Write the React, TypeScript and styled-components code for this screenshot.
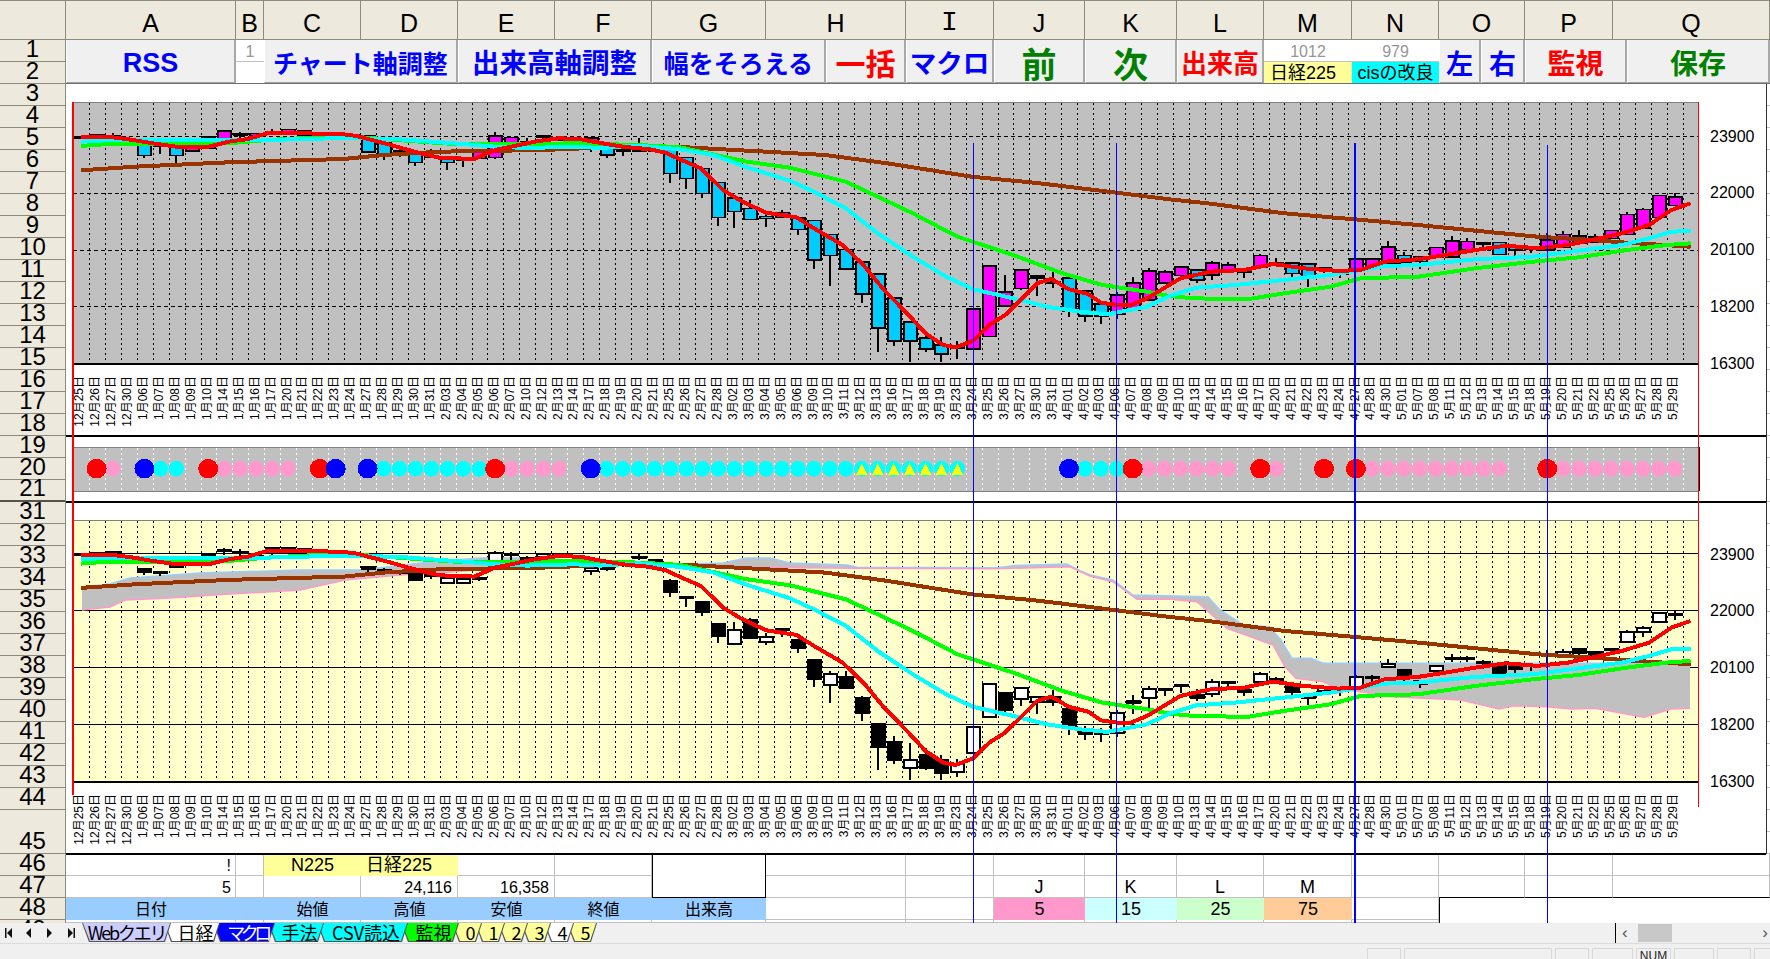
import styled, { createGlobalStyle } from 'styled-components'

const GlobalStyle = createGlobalStyle`
  html, body {
    margin: 0;
    padding: 0;
    background: #fff;
    font-family: "Liberation Sans", "Noto Sans CJK JP", sans-serif;
  }
`

const SANS = '"Liberation Sans", "Noto Sans CJK JP", sans-serif'
const HEADER_BG = '#eee9dd'
const HEADER_LINE = '#8c8a7a'
const GRID_LINE = '#c0c0c0'

const Page = styled.div`
  position: relative;
  width: 1770px;
  height: 959px;
  overflow: hidden;
  display: flex;
  flex-direction: column;
  background: #fff;
`

const Sheet = styled.div`
  display: flex;
  height: 923px;
  overflow: hidden;
`

const RowHeaders = styled.div`
  flex: none;
  width: 66px;
  display: flex;
  flex-direction: column;
`

const Corner = styled.div`
  flex: none;
  height: 40px;
  box-sizing: border-box;
  background: ${HEADER_BG};
  border-right: 1px solid ${HEADER_LINE};
  border-bottom: 1px solid ${HEADER_LINE};
  border-top: 1px solid ${HEADER_LINE};
`

const RowHead = styled.div<{ $h: number; $heavy?: boolean }>`
  flex: none;
  height: ${(p) => p.$h}px;
  box-sizing: border-box;
  background: ${HEADER_BG};
  border-right: 1px solid ${HEADER_LINE};
  border-bottom: ${(p) => (p.$heavy ? '2px solid #55544a' : `1px solid ${HEADER_LINE}`)};
  display: flex;
  align-items: flex-end;
  justify-content: center;
  font-size: 24px;
  line-height: 24px;
  color: #000;
`

const SheetBody = styled.div`
  flex: 1;
  display: flex;
  flex-direction: column;
  min-width: 0;
`

const ColumnBar = styled.div`
  display: flex;
  flex: none;
  height: 40px;
`

const ColHead = styled.div<{ $w: number; $mono?: boolean }>`
  flex: none;
  width: ${(p) => p.$w}px;
  box-sizing: border-box;
  background: ${HEADER_BG};
  border-top: 1px solid ${HEADER_LINE};
  border-right: 1px solid ${HEADER_LINE};
  border-bottom: 1px solid ${HEADER_LINE};
  padding-top: 6px;
  text-align: center;
  font-family: ${(p) => (p.$mono ? '"Liberation Mono", monospace' : SANS)};
  font-size: ${(p) => (p.$mono ? 28 : 25)}px;
  line-height: 32px;
  color: #000;
`

const ButtonRow = styled.div`
  display: flex;
  flex: none;
  height: 44px;
  border-bottom: 1px solid #707070;
  box-sizing: border-box;
`

const MacroButton = styled.div<{ $w: number; $color: string; $size?: number }>`
  flex: none;
  width: ${(p) => p.$w}px;
  box-sizing: border-box;
  background: #f0f0f0;
  border-left: 1px solid #fff;
  border-right: 2px solid #a8a8a8;
  border-bottom: 1px solid #a0a0a0;
  display: flex;
  align-items: center;
  justify-content: center;
  padding-top: 2px;
  color: ${(p) => p.$color};
  font-family: "Noto Sans CJK JP", ${SANS};
  font-weight: 700;
  font-size: ${(p) => p.$size ?? 25}px;
  line-height: 1;
  white-space: nowrap;
`

const LatinLabel = styled.span`
  padding-top: 3px;
  font-family: ${SANS};
  font-weight: 700;
  font-size: 27px;
`

const StackCell = styled.div<{ $w: number }>`
  flex: none;
  width: ${(p) => p.$w}px;
  display: flex;
  flex-direction: column;
`

const StackTop = styled.div`
  flex: none;
  height: 22px;
  box-sizing: border-box;
  background: #fff;
  border-bottom: 1px solid ${GRID_LINE};
  text-align: center;
  color: #969696;
  font-size: 16px;
  line-height: 24px;
`

const StackBottom = styled.div<{ $bg: string; $size?: number; $inset?: number }>`
  flex: 1;
  background: ${(p) => p.$bg};
  color: #000;
  font-size: ${(p) => p.$size ?? 18}px;
  line-height: 23px;
  padding-right: ${(p) => p.$inset ?? 0}px;
  text-align: center;
  white-space: nowrap;
  overflow: hidden;
`

const Blank = styled.div`
  flex: none;
  height: 770px;
  background: repeating-linear-gradient(to bottom, #fff 0, #fff 21px, ${GRID_LINE} 21px, ${GRID_LINE} 22px);
`

const GridRow = styled.div<{ $h: number }>`
  display: flex;
  flex: none;
  height: ${(p) => p.$h}px;
`

const Cell = styled.div<{
  $w: number
  $bg?: string
  $align?: string
  $pad?: number
  $boxSide?: boolean
  $boxBottom?: boolean
  $boxLeft?: boolean
  $bare?: boolean
  $size?: number
}>`
  flex: none;
  width: ${(p) => p.$w}px;
  box-sizing: border-box;
  background: ${(p) => p.$bg ?? '#fff'};
  border-right: ${(p) => (p.$boxSide ? '1px solid #000' : p.$bg || p.$bare ? 'none' : `1px solid ${GRID_LINE}`)};
  border-left: ${(p) => (p.$boxSide || p.$boxLeft ? '1px solid #000' : 'none')};
  border-bottom: ${(p) =>
    p.$boxBottom ? '1px solid #000' : p.$bare ? 'none' : p.$bg ? `1px solid ${p.$bg}` : `1px solid ${GRID_LINE}`};
  padding: 0 ${(p) => p.$pad ?? 0}px;
  text-align: ${(p) => p.$align ?? 'center'};
  font-size: ${(p) => p.$size ?? 16}px;
  line-height: 23px;
  color: #000;
  white-space: nowrap;
`

const ChartLayer = styled.svg`
  position: absolute;
  left: 0;
  top: 0;
  pointer-events: none;
`

const DateLabel = styled.text`
  font-family: ${SANS};
  font-size: 12px;
  fill: #000;
  text-anchor: end;
`

const AxisLabel = styled.text`
  font-family: ${SANS};
  font-size: 16px;
  fill: #000;
`

const TabBar = styled.div`
  flex: none;
  height: 20px;
  display: flex;
  align-items: stretch;
  background: #f0f0f0;
`

const TabNav = styled.div`
  flex: none;
  width: 82px;
`

const TabStrip = styled.div`
  flex: none;
  width: 1534px;
  display: flex;
  border-right: 1px solid #000;
  box-sizing: border-box;
`

const SheetTab = styled.div<{ $w: number; $bg: string; $fg?: string; $z: number; $first?: boolean; $squeeze?: number }>`
  position: relative;
  flex: none;
  width: ${(p) => p.$w}px;
  height: 19px;
  margin-left: ${(p) => (p.$first ? 0 : -7)}px;
  z-index: ${(p) => p.$z};
  background: #555;
  clip-path: polygon(0 0, 100% 0, calc(100% - 6px) 100%, 7px 100%);
  font-family: "Noto Sans CJK JP", ${SANS};
  font-size: 18px;
  letter-spacing: ${(p) => p.$squeeze ?? 0}px;
  color: ${(p) => p.$fg ?? '#000'};

  &::before {
    content: '';
    position: absolute;
    inset: 0 1px 1px 1px;
    background: ${(p) => p.$bg};
    clip-path: polygon(0 0, 100% 0, calc(100% - 6px) 100%, 7px 100%);
  }
`

const TabText = styled.span<{ $first?: boolean }>`
  position: absolute;
  left: ${(p) => (p.$first ? 0 : 7)}px;
  right: 0;
  top: 0;
  text-align: center;
  line-height: 19px;
  white-space: nowrap;
`

const ScrollBar = styled.div`
  flex: 1;
  position: relative;
  display: flex;
  align-items: center;
  justify-content: space-between;
  padding: 0 2px 0 6px;
  color: #555;
  font-size: 17px;
  line-height: 18px;
`

const ScrollThumb = styled.div`
  position: absolute;
  left: 22px;
  top: 1px;
  width: 34px;
  height: 18px;
  background: #c8c8c8;
`

const StatusBar = styled.div`
  flex: none;
  height: 16px;
  box-sizing: border-box;
  border-top: 1px solid #dcdcdc;
  background: #f0f0f0;
  display: flex;
  padding-top: 4px;
  overflow: hidden;
`

const StatusText = styled.div`
  flex: none;
  width: 1367px;
  margin-left: -7px;
  margin-right: 7px;
  font-size: 12px;
  line-height: 14px;
  color: #222;
`

const StatusPanel = styled.div<{ $w: number }>`
  flex: none;
  width: ${(p) => p.$w}px;
  height: 16px;
  box-sizing: border-box;
  margin-right: 3px;
  border: 1px solid #d8d8d8;
  border-bottom: none;
  font-size: 12px;
  line-height: 15px;
  text-align: center;
  color: #222;
`

const COLS = [
  ['A', 170], ['B', 28], ['C', 97], ['D', 97], ['E', 97], ['F', 97], ['G', 114], ['H', 140], ['I', 88],
  ['J', 91], ['K', 92], ['L', 87], ['M', 88], ['N', 87], ['O', 86], ['P', 88], ['Q', 157],
] as [string, number][]

const ROW_LABELS = [
  ...Array.from({ length: 21 }, (_, i) => i + 1),
  ...Array.from({ length: 14 }, (_, i) => i + 31),
  45, 46, 47, 48, 49,
]

const DATES = [
  '12月25日','12月26日','12月27日','12月30日',
  ...[6,7,8,9,10,14,15,16,17,20,21,22,23,24,27,28,29,30,31].map((d) => `1月${String(d).padStart(2, '0')}日`),
  ...[3,4,5,6,7,10,12,13,14,17,18,19,20,21,25,26,27,28].map((d) => `2月${String(d).padStart(2, '0')}日`),
  ...[2,3,4,5,6,9,10,11,12,13,16,17,18,19,23,24,25,26,27,30,31].map((d) => `3月${String(d).padStart(2, '0')}日`),
  ...[1,2,3,6,7,8,9,10,13,14,15,16,17,20,21,22,23,24,27,28,30].map((d) => `4月${String(d).padStart(2, '0')}日`),
  ...[1,7,8,11,12,13,14,15,18,19,20,21,22,25,26,27,28,29].map((d) => `5月${String(d).padStart(2, '0')}日`),
]

// wick top, body top, body bottom, wick bottom, up
type Bar = [number, number, number, number, number]

const TOP_BARS: Bar[] = [
  [137,137,138,138,0],[134,134.3,137.3,137.3,1],[133,136,137,137.5,0],[139,140,141.7,142,0],[144,144,155.3,158.3,0],
  [144,145,146,154,0],[146,146,155.3,164,0],[146,146.7,151,151,1],[136,136.7,148.3,149,1],[131,131,142.7,143,1],
  [132,134,135,137.5,0],[133,133.3,136,136,1],[129,131.7,133.3,134,1],[129,129.3,132.7,133,1],[130,131,135,135,1],
  [131.7,134,135,136.7,0],[133,134,135,136,0],[134,135,136,137,0],[135,135.3,151.7,152.7,0],[142,142.3,154,160,0],
  [149.3,151,152.7,156.7,0],[154,154.3,162.3,165.7,0],[149,156,157,158.3,0],[156.7,156.7,162.3,170,0],[158,159,160,166.7,0],
  [150,150,158.3,158.3,1],[132.3,136,157.3,158.7,1],[137,137.3,150.7,151,1],[138.3,142,143,150,0],[134.7,136,137,143.3,0],
  [137,138,140,141,1],[137,139,140,140,0],[138,138,143.3,151.7,1],[143,143.3,155,158.3,0],[148,150,151,156,0],
  [137.7,149.3,150.7,151,0],[148,150,151,152,0],[148,148.3,173.3,182.7,0],[157,157.3,178.3,188.7,0],[168,168.3,193.3,197.7,0],
  [182,182.3,217.3,225.7,0],[197,197.7,211.3,227.7,0],[200,208.3,219.3,220.3,0],[214.3,216.3,218.3,226.7,0],[210,212.3,217.3,218,1],
  [217,217.7,229.3,234.7,0],[220,220.3,260.3,268.7,0],[234,234.3,255.3,285.7,0],[249,249.3,269.3,270.3,0],[262,262.3,294.3,302.7,0],
  [274,274.3,328.3,351.7,0],[298,298.3,341.3,345.7,0],[322,322.3,341.3,361.7,0],[333.3,338.3,349.3,351.7,0],[337.3,345.3,354.3,361.7,0],
  [341,347.3,348.7,358.7,0],[309,309.3,349.3,350,1],[265.3,266.3,336.7,337.3,1],[275,292.3,306,307.3,1],[270,270.3,288.7,290,1],
  [276,276,278.3,295.7,0],[272.3,281.7,283.3,287.7,0],[278,278.3,311.7,316.7,0],[291,291.3,316.3,321.7,0],[304,304.3,316.3,324,0],
  [292.3,295.3,314.3,319,1],[277.3,283.3,310,310,1],[268.3,271.3,300,300,1],[270,272.3,283,283,1],[267,267.3,275.7,278,1],
  [270,270.3,280.3,283,0],[261,263.3,275,280,1],[262.3,265.3,270,270,1],[270,270,272.3,277.7,1],[254,255.3,267.3,267.3,1],
  [258.3,262.7,265.3,265.3,1],[263,263.3,273.7,276.7,0],[264,264.3,277.3,286.7,0],[268,268,270,273.3,0],[270,270,274,277.7,0],
  [259,259.3,271.7,272,1],[258.3,259.3,266.7,267,1],[241,246.7,263.3,263.3,1],[252.3,255.3,262.7,265,0],[256.7,256.7,261.3,269.3,0],
  [247,247.3,256.7,257,1],[236,240.7,256.7,257.3,1],[238.3,241.3,250,250,1],[241.7,243,244,250,0],[242,242.3,254.3,255,0],
  [246.7,246.7,250,255.7,0],[246,248,249,252.7,0],[232.7,240,250,250,1],[231.3,234.3,246.7,247,1],[230,235.7,243.3,243.3,1],
  [234.3,236.7,241.7,242,0],[230,230.3,238.3,238.3,1],[212,214.3,234.3,235.3,1],[208.3,209.3,227.7,228,1],[195,195.3,217.3,217.3,1],
  [193.3,196.7,205.3,205.3,1],
]

const BOTTOM_BARS: Bar[] = [
  [553,554,555,555,0],[552,553,557,557,1],[551,552,555,556,0],[557,558,560,561,0],[568,569,572,575,0],
  [571,572,573,576,0],[563,564,567,568,1],[561,562,563,564,0],[553,554,557,558,0],[548,550,551,555,0],
  [549,552,553,556,0],[555,556,557,558,0],[547.7,547.7,548.7,555,0],[548,548.3,549.3,552,0],[547.7,548.7,550.7,553,0],
  [549,550.7,554,554,1],[550.7,550.7,551.7,553,0],[553,554,555,556,0],[566,567,569,572,0],[568,570,571,574,0],
  [570,572,573,575,0],[571,572,580,581,0],[574,575,576,579,0],[577,578,583,584,1],[578,579,583,584,1],
  [577,578,579,581,0],[550.7,553,561,562,1],[552,554,555,560,0],[556,558,559,561,0],[553,554.3,556.7,557,1],
  [554,554,555,558,0],[559,560,561,562,0],[566,568,571,575,1],[565,566,569,571,0],[561,563,564,567,0],
  [553,557,558,560,0],[559,560,561,562,0],[579,581,592,597,0],[597,597.3,598,606.7,0],[602,602.3,611.7,616,0],
  [624,624,635.7,643,0],[622.3,630.3,644.3,645.3,1],[618.3,620,637.7,638.7,0],[633.3,637.3,642.3,644.7,1],[628.7,628.7,629.3,636.7,0],
  [638.7,640,647.7,652.7,0],[660,660,678.7,686.7,0],[671,674.3,685.3,703.3,1],[671,677,687.7,688.3,0],[696,698,712.7,721,0],
  [724,724.3,746.7,770,0],[736,742,760,764,0],[743.3,760.3,767.7,780,1],[748.3,755,767.7,770,0],[755,760,772.7,780,0],
  [759.3,764,772.3,776.7,1],[727,727.3,753.3,754,1],[683.3,684.3,716.7,717.3,1],[693,693.3,710,715,0],[688,688.3,698.7,705.7,1],
  [697,697.3,702.3,714,1],[690,696.7,701.7,705.7,0],[709,709,726.7,735,0],[726,731.7,734.3,740,0],[728,731.7,734.3,741.7,0],
  [710,713.3,733.3,736.7,1],[695,701.3,703.3,714,1],[686,689,698.3,709.3,1],[689,689,690,695.7,0],[685,685,686,693.3,0],
  [689.3,695,698.3,700.7,0],[679,681.7,694.3,697.3,1],[680.7,682,683,686.7,0],[690,690,691.7,695.7,0],[672.3,674,682.3,682.3,1],
  [676.7,679,680,682.7,0],[686,686,691.7,695,0],[696.7,696.7,697.3,705,0],[686,686.7,690.7,691,1],[688,688,690,696,1],
  [675,677.3,687.7,688,1],[675.3,676.7,677.3,681.7,0],[659,664.3,666.7,667.7,1],[670,670,678.3,682.7,0],[680,680.7,684,688.3,1],
  [665,665.7,670.7,673.3,1],[654.3,658.3,659.3,661.7,0],[656,658.3,659,661.7,0],[660,662,663,669,0],[666,666,672.7,674,0],
  [666,666.7,668.7,674,0],[664,665,666,670.7,0],[650,664,665,668,0],[649.3,652.3,655.7,657,1],[648.3,649.3,652.7,655.7,0],
  [652,652.3,657.3,660,0],[648.7,648.7,649.3,655,0],[630,632.3,641.7,643.3,1],[625.7,627.7,632.3,636.7,1],[612.3,613.3,621.7,623.3,1],
  [610.7,614,615,620,0],
]

const RED: number[][] = [
  [0,137.3],[2,137.3],[3.3,140],[4.5,143.3],[6,146.7],[8,146.7],[9.3,141.7],[10.5,139],[11.7,133.3],[14,133.3],[16.5,134.3],[17.3,136],
  [19,143],[21.3,153.3],[22.5,157.7],[24.7,159],[26,150],[28.5,141.7],[30,138.3],[31.4,139.3],[32.6,143],[34,146.7],[35.7,149.3],[36.7,152.7],
  [37.6,159.3],[38.9,168.3],[40.3,190],[41.4,200.7],[43,212.7],[44.9,217.3],[46,228.3],[47.8,245],[49.1,265],[50.4,290],[51.8,312.7],[53,333.3],
  [54.1,345],[54.9,347.3],[56,340.7],[57,325],[58,315],[60,283.3],[60.9,279],[62,289.3],[63.2,294],[64,302.7],[65,305],[65.9,305],[66.9,298.3],
  [68.3,285],[69,278.3],[70.9,271.7],[73,270],[74.8,264],[76.7,268.3],[78.9,271],[80.3,270],[81.8,261.7],[83.9,259.3],[85.6,255],[87.5,250],
  [89.4,245.7],[91.4,248.3],[93.3,245],[94.8,240],[96.7,233.3],[98.4,225],[99.8,210],[101,203.3],
]

const CYAN: number[][] = [
  [0,141.7],[2,140],[6,140],[11.7,140],[16.5,138],[20,139.3],[22,141.7],[24,144],[26,146.7],[28,148],[31,146.7],[32.6,148],[35,145.7],[37.6,149.3],
  [39.7,155],[41.8,167.3],[44.5,180.7],[46,191.7],[48,208.3],[50,233.3],[52.2,256.7],[54.3,276.7],[56,289.3],[58.5,298.3],[60.6,306.7],[62.7,311.7],
  [64.4,314.3],[66.9,306.7],[68.3,296],[70,287.7],[72.4,285],[75.5,280],[78.4,275],[80.3,270],[81.8,266],[83.9,265],[87.5,259.3],[91.1,256.7],
  [94.3,250],[96.7,245],[98.4,238.3],[99.8,231.7],[101,231],
]

const GREEN: number[][] = [
  [0,146],[1.7,144],[4.5,144],[9.3,143.3],[11.7,140],[16.5,136],[21.3,141.7],[23.7,144.3],[28.5,144],[31,143.3],[32.6,144],[35,145],[37.6,147.3],
  [41.8,161.7],[44.5,167.7],[48,181.7],[50,196.7],[52.2,213.3],[55,236.7],[58.5,255],[61.6,273.3],[64.1,285],[66.9,291.7],[68.3,296],[69.8,298.3],
  [73.2,299.3],[75.5,293.3],[78.4,286.7],[80.3,278.3],[83.9,276.7],[87.5,268.3],[91.1,261.7],[94,257.3],[97,250],[99.5,245],[101,243.3],
]

const BROWN: number[][] = [
  [0,170.3],[3.4,166.7],[9.3,162.3],[16.5,159],[19,155],[22.5,151.7],[29,150],[34,146.7],[38,147.3],[43,151.7],[46.7,155],[50.6,163.3],
  [55.9,176.7],[60,183],[65,192.7],[68.3,199.3],[70.7,203.3],[75.5,213.3],[79.9,219.3],[83.9,225],[87.5,230.7],[91.4,236.7],[94.8,240],[97,242.7],[101,246.7],
]

const CLOUD_UPPER = [
  [82,587],[110,584],[130,578],[200,573],[300,570],[360,570],[430,562],[480,558],[540,558],[600,562],[680,564],[723,563],[747,558],[770,558],[790,563],
  [847,565],[857,567.3],[997,567.7],[1013,565.7],[1067,564],[1080,570.7],[1090,575],[1113,580],[1133,595],[1208,596.7],[1220,610],[1243,625],
  [1269,626.7],[1281,640],[1292,658.3],[1311,658.3],[1323,663.3],[1690,663.3],
]

const CLOUD_LOWER = [
  [82,610],[110,607],[125,600],[170,598],[230,594],[300,590],[345,580],[400,575],[440,573],[500,568],[560,567],[600,565],[680,565],[730,567.3],[857,568.3],
  [997,568.7],[1070,566.7],[1090,576],[1113,581.7],[1137,599.3],[1170,599.3],[1197,601.7],[1227,628.3],[1246,635],[1273,645],[1285,666.7],
  [1296,678.3],[1323,681.7],[1338,688.3],[1392,696.7],[1461,700],[1499,709],[1514,705.7],[1547,706.7],[1572,709],[1595,708.3],[1644,717.3],
  [1671,709],[1690,708.3],
]

const PLOT_LEFT = 73
const PLOT_RIGHT = 1698
const STEP = 15.94
const SECOND_CHART_OFFSET = 417.6

const xAt = (i: number) => 80.7 + STEP * i
const DIVIDERS = Array.from({ length: 101 }, (_, k) => Math.round(PLOT_LEFT + STEP * (k + 1)))

const toPoints = (line: number[][], dy: number) => line.map(([i, y]) => `${xAt(i).toFixed(1)},${(y + dy).toFixed(1)}`).join(' ')

const Candles = ({ bars, upFill, downFill }: { bars: Bar[]; upFill: string; downFill: string }) => (
  <g shapeRendering="crispEdges">
    {bars.map(([wt, bt, bb, wb, up], i) => {
      const x = Math.round(xAt(i))
      return (
        <g key={i}>
          <rect x={x - 1} y={wt} width={2} height={wb - wt} fill="#000" />
          <rect x={x - 6} y={bt} width={13} height={Math.max(bb - bt, 1)} fill={up ? upFill : downFill} stroke="#000" strokeWidth={1.6} />
        </g>
      )
    })}
  </g>
)

const MovingAverages = ({ dy }: { dy: number }) => (
  <g fill="none" shapeRendering="crispEdges" strokeLinejoin="round">
    <polyline points={toPoints(BROWN, dy)} stroke="#993300" strokeWidth={4} />
    <polyline points={toPoints(GREEN, dy)} stroke="#00ff00" strokeWidth={4} />
    <polyline points={toPoints(CYAN, dy)} stroke="#00ffff" strokeWidth={4} />
    <polyline points={toPoints(RED, dy)} stroke="#ff0000" strokeWidth={4} />
  </g>
)

const DateAxis = ({ y }: { y: number }) => (
  <g>
    {DATES.map((d, i) => {
      const x = xAt(i) + 2.6
      return (
        <DateLabel key={i} x={x} y={y} transform={`rotate(-90 ${x} ${y})`}>
          {d}
        </DateLabel>
      )
    })}
  </g>
)

const PriceAxis = ({ top }: { top: number }) => (
  <g>
    {['23900', '22000', '20100', '18200', '16300'].map((v, i) => (
      <AxisLabel key={v} x={1710} y={top + 56.9 * i + 5.5}>
        {v}
      </AxisLabel>
    ))}
  </g>
)

// kind per date column of the signal strip: big dots, small dots, cyan dot with triangle
const signalAt = (i: number) => {
  const big: Record<number, string> = { 1: '#ff0000', 4: '#0000ff', 8: '#ff0000', 15: '#ff0000', 16: '#0000ff', 18: '#0000ff', 26: '#ff0000', 32: '#0000ff', 62: '#0000ff', 66: '#ff0000', 74: '#ff0000', 78: '#ff0000', 80: '#ff0000', 92: '#ff0000' }
  if (big[i]) return { big: big[i] }
  const pink = [[2, 2], [9, 13], [27, 30], [67, 72], [75, 75], [81, 89], [93, 100]]
  if (pink.some(([a, b]) => i >= a && i <= b)) return { small: '#ff99cc' }
  const cyan = [[5, 6], [19, 25], [33, 55], [63, 65]]
  if (cyan.some(([a, b]) => i >= a && i <= b)) return { small: '#00ffff', tri: i >= 49 && i <= 55 }
  return {}
}

const SignalStrip = () => {
  const items = Array.from({ length: 101 }, (_, i) => ({ i, x: xAt(i), ...signalAt(i) })) as {
    i: number
    x: number
    big?: string
    small?: string
    tri?: boolean
  }[]
  return (
    <g>
      <rect x={PLOT_LEFT} y={447} width={PLOT_RIGHT - PLOT_LEFT} height={44} fill="#c0c0c0" stroke="#808080" shapeRendering="crispEdges" />
      {DIVIDERS.map((x) => (
        <line key={x} x1={x + 0.5} x2={x + 0.5} y1={448} y2={491} stroke="#fff" strokeDasharray="2 3" shapeRendering="crispEdges" />
      ))}
      <rect x={PLOT_RIGHT} y={447} width={2} height={44} fill="#000" />
      <g shapeRendering="crispEdges">
        {items.filter((s) => s.small).map((s) => (
          <ellipse key={s.i} cx={s.x} cy={468.7} rx={7.6} ry={8} fill={s.small} />
        ))}
        {items.filter((s) => s.tri).map((s) => (
          <polygon key={s.i} points={`${s.x},463 ${s.x + 5.7},475 ${s.x - 5.7},475`} fill="#ffff00" />
        ))}
        {items.filter((s) => s.big).map((s) => (
          <ellipse key={s.i} cx={s.x} cy={468.7} rx={10} ry={9.8} fill={s.big} />
        ))}
      </g>
    </g>
  )
}

const Charts = () => {
  const cloud = `${CLOUD_UPPER.map((p) => p.join(',')).join(' ')} ${[...CLOUD_LOWER].reverse().map((p) => p.join(',')).join(' ')}`
  return (
    <ChartLayer width={1770} height={923} viewBox="0 0 1770 923">
      <rect x={66} y={84} width={1700} height={770} fill="#fff" />
      <g shapeRendering="crispEdges">
        <line x1={1766.5} x2={1766.5} y1={84} y2={854} stroke="#333" />
        <rect x={66} y={435} width={1700} height={1.5} fill="#000" />
        <rect x={66} y={501} width={1700} height={1.5} fill="#000" />
        <rect x={66} y={853} width={1700} height={1.5} fill="#000" />

        <rect x={PLOT_LEFT} y={102} width={PLOT_RIGHT - PLOT_LEFT} height={261} fill="#c0c0c0" />
        <line x1={PLOT_LEFT} x2={PLOT_RIGHT} y1={102.5} y2={102.5} stroke="#808080" />
        {[135.7, 192.6, 249.5, 306.4].map((y) => (
          <line key={y} x1={PLOT_LEFT} x2={PLOT_RIGHT} y1={Math.round(y) + 0.5} y2={Math.round(y) + 0.5} stroke="#000" strokeDasharray="4 3" />
        ))}
        {DIVIDERS.map((x) => (
          <line key={x} x1={x + 0.5} x2={x + 0.5} y1={103} y2={363} stroke="#000" strokeDasharray="2 3" />
        ))}
        <rect x={PLOT_LEFT} y={363} width={PLOT_RIGHT - PLOT_LEFT} height={1.5} fill="#000" />

        <rect x={PLOT_LEFT} y={521} width={PLOT_RIGHT - PLOT_LEFT} height={260} fill="#ffffcc" />
        <line x1={PLOT_LEFT} x2={PLOT_RIGHT} y1={520.5} y2={520.5} stroke="#808080" />
        {DIVIDERS.map((x) => (
          <line key={x} x1={x + 0.5} x2={x + 0.5} y1={521} y2={781} stroke="#000" strokeDasharray="2 3" />
        ))}
        {[553, 610, 667, 724].map((y) => (
          <line key={y} x1={PLOT_LEFT} x2={PLOT_RIGHT} y1={y + 0.5} y2={y + 0.5} stroke="#000" />
        ))}
        <rect x={PLOT_LEFT} y={781} width={PLOT_RIGHT - PLOT_LEFT} height={1.5} fill="#000" />
      </g>

      <Candles bars={TOP_BARS} upFill="#ff00ff" downFill="#00ccff" />
      <MovingAverages dy={0} />
      <DateAxis y={376} />
      <PriceAxis top={136} />

      <SignalStrip />

      <polygon points={cloud} fill="#c0c0c0" />
      <polyline points={CLOUD_UPPER.map((p) => p.join(',')).join(' ')} fill="none" stroke="#99ccff" strokeWidth={1.5} />
      <polyline points={CLOUD_LOWER.map((p) => p.join(',')).join(' ')} fill="none" stroke="#ff99cc" strokeWidth={1.5} />
      <Candles bars={BOTTOM_BARS} upFill="#ffffff" downFill="#000000" />
      <MovingAverages dy={SECOND_CHART_OFFSET} />
      <DateAxis y={794} />
      <PriceAxis top={554} />

      <g shapeRendering="crispEdges">
        <rect x={72} y={102} width={2} height={693} fill="#ff0000" />
        <rect x={PLOT_RIGHT} y={102} width={1} height={705} fill="#ff0000" />
        <rect x={973} y={143} width={1} height={780} fill="#0000ff" />
        <rect x={1116} y={143} width={1} height={780} fill="#0000ff" />
        <rect x={1354} y={143} width={2} height={780} fill="#0000ff" />
        <rect x={1547} y={145} width={1} height={778} fill="#0000ff" />
      </g>
    </ChartLayer>
  )
}

const NavGlyphs = () => (
  <svg width={82} height={20} viewBox="0 0 82 20">
    <g fill="#111">
      <rect x={5} y={5} width={1.5} height={10} />
      <polygon points="7,10 12,5 12,15" />
      <polygon points="26,10 31,5 31,15" />
      <polygon points="47,5 52,10 47,15" />
      <polygon points="68,5 73,10 68,15" />
      <rect x={73.5} y={5} width={1.5} height={10} />
    </g>
  </svg>
)

const TABS = [
  { label: 'Webクエリ', w: 89, bg: '#ccccff', squeeze: -2.2 },
  { label: '日経', w: 56, bg: '#ffffff' },
  { label: 'マクロ', w: 62, bg: '#0000ff', fg: '#fff', squeeze: -4.5 },
  { label: '手法', w: 56, bg: '#00ffff' },
  { label: 'CSV読込', w: 91, bg: '#00ffff' },
  { label: '監視', w: 58, bg: '#00ff00' },
  { label: '0', w: 30, bg: '#ffff99' },
  { label: '1', w: 30, bg: '#ffff99' },
  { label: '2', w: 30, bg: '#ffff99' },
  { label: '3', w: 30, bg: '#ffff99' },
  { label: '4', w: 30, bg: '#ffffff' },
  { label: '5', w: 30, bg: '#ffff99' },
]

const App = () => {
  const rest = COLS.slice(7)
  return (
    <Page>
      <GlobalStyle />
      <Sheet>
        <RowHeaders>
          <Corner />
          {ROW_LABELS.map((n) => (
            <RowHead key={n} $h={n === 45 ? 44 : 22} $heavy={n === 21}>
              {n}
            </RowHead>
          ))}
        </RowHeaders>

        <SheetBody>
          <ColumnBar>
            {COLS.map(([name, w]) => (
              <ColHead key={name} $w={w} $mono={name === 'I'}>
                {name}
              </ColHead>
            ))}
          </ColumnBar>

          <ButtonRow>
            <MacroButton $w={170} $color="#0000ff"><LatinLabel>RSS</LatinLabel></MacroButton>
            <StackCell $w={28}>
              <StackTop>1</StackTop>
              <StackBottom $bg="#fff" />
            </StackCell>
            <MacroButton $w={194} $color="#0000ff">チャート軸調整</MacroButton>
            <MacroButton $w={194} $color="#0000ff" $size={27.5}>出来高軸調整</MacroButton>
            <MacroButton $w={174} $color="#0000ff">幅をそろえる</MacroButton>
            <MacroButton $w={80} $color="#ff0000" $size={30}>一括</MacroButton>
            <MacroButton $w={88} $color="#0000ff" $size={26.5}>マクロ</MacroButton>
            <MacroButton $w={91} $color="#008000" $size={35}>前</MacroButton>
            <MacroButton $w={92} $color="#008000" $size={35}>次</MacroButton>
            <MacroButton $w={87} $color="#ff0000" $size={26}>出来高</MacroButton>
            <StackCell $w={88}>
              <StackTop>1012</StackTop>
              <StackBottom $bg="#ffff99" $inset={10}>日経225</StackBottom>
            </StackCell>
            <StackCell $w={87}>
              <StackTop>979</StackTop>
              <StackBottom $bg="#00ffff">cisの改良</StackBottom>
            </StackCell>
            <MacroButton $w={42} $color="#0000ff" $size={27}>左</MacroButton>
            <MacroButton $w={44} $color="#0000ff" $size={27}>右</MacroButton>
            <MacroButton $w={102} $color="#ff0000" $size={28}>監視</MacroButton>
            <MacroButton $w={143} $color="#008000" $size={28}>保存</MacroButton>
          </ButtonRow>

          <Blank />

          <GridRow $h={22}>
            <Cell $w={170} $align="right" $pad={4}>!</Cell>
            <Cell $w={28} />
            <Cell $w={97} $bg="#ffff99" $size={18}>N225</Cell>
            <Cell $w={97} $bg="#ffff99" $size={18} $align="left" $pad={5}>日経225</Cell>
            <Cell $w={97} />
            <Cell $w={97} />
            <Cell $w={114} $boxSide $bare />
            {rest.map(([name, w]) => <Cell key={name} $w={w} />)}
          </GridRow>

          <GridRow $h={22}>
            <Cell $w={170} $align="right" $pad={4}>5</Cell>
            <Cell $w={28} />
            <Cell $w={97} />
            <Cell $w={97} $align="right" $pad={5}>24,116</Cell>
            <Cell $w={97} $align="right" $pad={5}>16,358</Cell>
            <Cell $w={97} />
            <Cell $w={114} $boxSide $boxBottom />
            <Cell $w={140} />
            <Cell $w={88} />
            <Cell $w={91} $size={18}>J</Cell>
            <Cell $w={92} $size={18}>K</Cell>
            <Cell $w={87} $size={18}>L</Cell>
            <Cell $w={88} $size={18}>M</Cell>
            <Cell $w={87} />
            <Cell $w={86} $boxBottom />
            <Cell $w={88} $boxBottom />
            <Cell $w={157} $boxBottom />
          </GridRow>

          <GridRow $h={22}>
            <Cell $w={170} $bg="#99ccff">日付</Cell>
            <Cell $w={28} $bg="#99ccff" />
            <Cell $w={97} $bg="#99ccff">始値</Cell>
            <Cell $w={97} $bg="#99ccff">高値</Cell>
            <Cell $w={97} $bg="#99ccff">安値</Cell>
            <Cell $w={97} $bg="#99ccff">終値</Cell>
            <Cell $w={114} $bg="#99ccff">出来高</Cell>
            <Cell $w={140} />
            <Cell $w={88} />
            <Cell $w={91} $bg="#ff99cc" $size={18}>5</Cell>
            <Cell $w={92} $bg="#ccffff" $size={18}>15</Cell>
            <Cell $w={87} $bg="#ccffcc" $size={18}>25</Cell>
            <Cell $w={88} $bg="#ffcc99" $size={18}>75</Cell>
            <Cell $w={87} />
            <Cell $w={331} $boxLeft $bare />
          </GridRow>

          <GridRow $h={3}>
            {COLS.slice(0, 14).map(([name, w]) => <Cell key={name} $w={w} />)}
            <Cell $w={331} $boxLeft $bare />
          </GridRow>
        </SheetBody>
      </Sheet>

      <Charts />

      <TabBar>
        <TabNav><NavGlyphs /></TabNav>
        <TabStrip>
          {TABS.map((t, i) => (
            <SheetTab key={t.label} $w={t.w} $bg={t.bg} $fg={t.fg} $z={TABS.length - i} $first={i === 0} $squeeze={t.squeeze}>
              <TabText $first={i === 0}>{t.label}</TabText>
            </SheetTab>
          ))}
        </TabStrip>
        <ScrollBar>
          <ScrollThumb />
          <span>‹</span>
          <span>›</span>
        </ScrollBar>
      </TabBar>

      <StatusBar>
        <StatusText>ｺ</StatusText>
        <StatusPanel $w={34} />
        <StatusPanel $w={148} />
        <StatusPanel $w={34} />
        <StatusPanel $w={41} />
        <StatusPanel $w={35}>NUM</StatusPanel>
        <StatusPanel $w={40} />
        <StatusPanel $w={34} />
        <StatusPanel $w={20} />
      </StatusBar>
    </Page>
  )
}

export default App
